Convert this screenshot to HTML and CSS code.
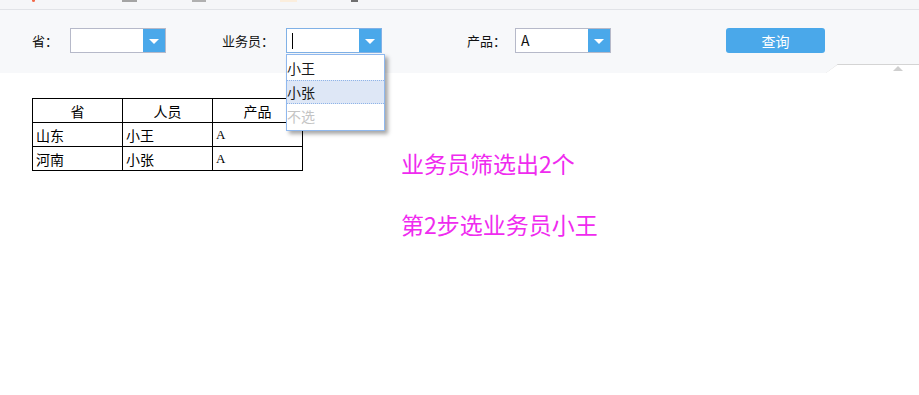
FILE: index.html
```html
<!DOCTYPE html>
<html lang="zh-CN">
<head>
    <meta charset="UTF-8">
    <title>参数查询</title>
    <link rel="stylesheet" href="styles.css">
</head>
<body>
    <div class="toolbar">
        <span class="tool-stub stub-red"></span>
        <span class="tool-stub stub-gray1"></span>
        <span class="tool-stub stub-gray2"></span>
        <span class="tool-stub stub-beige"></span>
        <span class="tool-stub stub-dark"></span>
    </div>

    <div class="param-panel">
        <label class="param-label label-prov">省：</label>
        <div class="combo">
            <div class="combo-input"></div>
            <div class="combo-btn"><span class="arrow"></span></div>
        </div>

        <label class="param-label label-staff">业务员：</label>
        <div class="combo-wrap">
            <div class="combo focused">
                <div class="combo-input"><span class="caret"></span></div>
                <div class="combo-btn"><span class="arrow"></span></div>
            </div>
            <ul class="dropdown">
                <li class="dropdown-item">小王</li>
                <li class="dropdown-item active">小张</li>
                <li class="dropdown-item none">不选</li>
            </ul>
        </div>

        <label class="param-label label-prod">产品：</label>
        <div class="combo">
            <div class="combo-input">A</div>
            <div class="combo-btn"><span class="arrow"></span></div>
        </div>

        <button class="query-btn">查询</button>

        <div class="collapse-tab"><span class="collapse-arrow"></span></div>
    </div>

    <div class="report">
        <table class="data-table">
            <colgroup>
                <col class="col">
                <col class="col">
                <col class="col">
            </colgroup>
            <tr>
                <th>省</th>
                <th>人员</th>
                <th>产品</th>
            </tr>
            <tr>
                <td>山东</td>
                <td>小王</td>
                <td class="mono">A</td>
            </tr>
            <tr>
                <td>河南</td>
                <td>小张</td>
                <td class="mono">A</td>
            </tr>
        </table>

        <div class="notes">
            <p class="note">业务员筛选出2个</p>
            <p class="note">第2步选业务员小王</p>
        </div>
    </div>
</body>
</html>
```

FILE: styles.css
```css
body {
    margin: 0;
    padding: 0;
    font-family: "Noto Sans CJK SC", "Noto Sans", sans-serif;
    font-size: 13px;
    color: #222;
    background: #fff;
    overflow: hidden;
}
.toolbar {
    height: 9px;
    background: #f5f6f8;
    border-bottom: 1px solid #e1e3e7;
    display: flex;
    align-items: flex-start;
}
.tool-stub {
    height: 2px;
    display: block;
}
.stub-red {
    width: 3px;
    margin-left: 32px;
    background: #f26a4a;
    border-radius: 0 0 2px 2px;
}
.stub-gray1 {
    width: 15px;
    margin-left: 87px;
    background: #a4a4a4;
}
.stub-gray2 {
    width: 14px;
    margin-left: 55px;
    background: #b0b0b0;
}
.stub-beige {
    width: 17px;
    margin-left: 74px;
    background: #fbeedd;
}
.stub-dark {
    width: 7px;
    margin-left: 54px;
    background: #707070;
}
.param-panel {
    position: relative;
    height: 63px;
    box-sizing: border-box;
    padding: 18px 0 0 32px;
    background: #f7f8fa;
    display: flex;
    align-items: flex-start;
}
.param-label {
    height: 25px;
    line-height: 25px;
    font-size: 13px;
    color: #111;
}
.label-prov {
    width: 38px;
}
.label-staff {
    width: 64px;
    margin-left: 56px;
}
.label-prod {
    width: 48px;
    margin-left: 85px;
}
.combo-wrap {
    position: relative;
}
.combo {
    width: 96px;
    height: 25px;
    box-sizing: border-box;
    border: 1px solid #b6b9c9;
    display: flex;
    background: #fff;
}
.combo.focused {
    border-color: #80b1e6;
}
.combo-input {
    flex: 1;
    padding-left: 5px;
    line-height: 23px;
    font-size: 14px;
    color: #111;
    display: flex;
    align-items: center;
}
.caret {
    width: 1px;
    height: 16px;
    background: #000;
}
.combo-btn {
    width: 22px;
    background: #4aa8ea;
    display: flex;
    align-items: center;
    justify-content: center;
}
.arrow {
    width: 0;
    height: 0;
    border-left: 5px solid transparent;
    border-right: 5px solid transparent;
    border-top: 5px solid #fff;
    margin-top: 1px;
}
.dropdown {
    position: absolute;
    top: 26px;
    left: 0;
    width: 99px;
    margin: 0;
    padding: 1px 0 2px;
    list-style: none;
    box-sizing: border-box;
    background: #fff;
    border: 1px solid #8fb8ee;
    box-shadow: 3px 3px 4px rgba(0, 0, 0, 0.35);
    z-index: 5;
}
.dropdown-item {
    height: 24px;
    line-height: 24px;
    padding-left: 0;
    font-size: 14px;
    color: #1a1a1a;
    box-sizing: border-box;
}
.dropdown-item.active {
    background: #dee7f6;
    border-top: 1px dotted #8fb4e8;
    border-bottom: 1px dotted #8fb4e8;
    line-height: 22px;
}
.dropdown-item.none {
    color: #c4c4c4;
}
.query-btn {
    width: 99px;
    height: 25px;
    margin-left: 115px;
    border: none;
    border-radius: 3px;
    background: #4aa8ea;
    color: #fff;
    font-family: "Noto Sans CJK SC", sans-serif;
    font-size: 14px;
    padding: 0;
    cursor: pointer;
}
.collapse-tab {
    position: absolute;
    right: 0;
    bottom: 0;
    width: 93px;
    height: 9px;
    box-sizing: border-box;
    background: #fff;
    border-top: 1px solid #d4d4d4;
    clip-path: polygon(12px 0, 100% 0, 100% 100%, 0 100%);
}
.collapse-tab::before {
    content: "";
    position: absolute;
    left: 0;
    bottom: 0;
    width: 15px;
    height: 1px;
    background: #d4d4d4;
    transform-origin: left bottom;
    transform: rotate(-36deg);
}
.collapse-arrow {
    position: absolute;
    left: 67px;
    top: 1px;
    width: 0;
    height: 0;
    border-left: 5px solid transparent;
    border-right: 5px solid transparent;
    border-bottom: 5px solid #cfcfcf;
}
.report {
    display: flex;
    align-items: flex-start;
    padding: 25px 0 0 32px;
}
.data-table {
    border-collapse: collapse;
    table-layout: fixed;
    width: 271px;
    font-size: 14px;
    color: #000;
}
.data-table .col {
    width: 90px;
}
.data-table th,
.data-table td {
    height: 23px;
    padding: 0 0 0 3px;
    border: 1px solid #000;
    line-height: 22px;
    text-align: left;
    font-weight: normal;
}
.data-table th {
    text-align: center;
    padding: 0;
}
.data-table .mono {
    font-family: "Liberation Serif", serif;
    font-size: 13px;
}
.notes {
    margin: 50px 0 0 98px;
}
.note {
    margin: 0 0 31px;
    height: 30px;
    line-height: 30px;
    font-size: 23px;
    color: #ef2bef;
}
```
